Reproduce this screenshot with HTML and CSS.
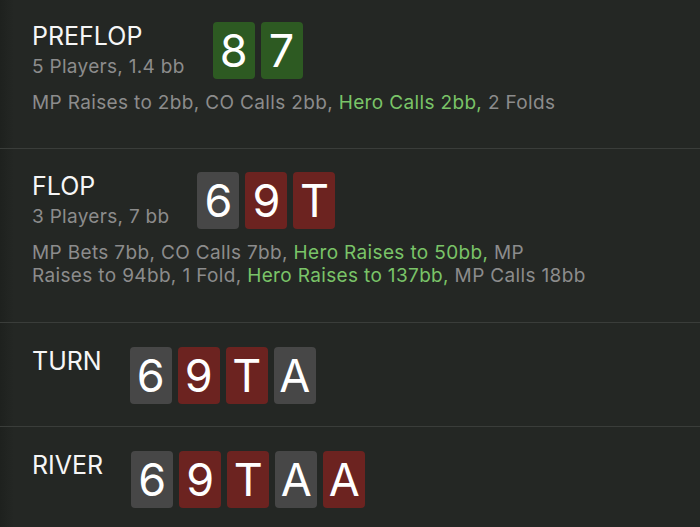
FILE: index.html
```html
<!DOCTYPE html>
<html lang="en">
<head>
<meta charset="utf-8">
<title>Hand history</title>
<link rel="stylesheet" href="styles.css">
</head>
<body>
<main class="hand">
  <section class="street street-first">
    <div class="head">
      <div class="info">
        <div class="name">PREFLOP</div>
        <div class="sub">5 Players, 1.4 bb</div>
      </div>
      <div class="cards">
        <span class="card green">8</span>
        <span class="card green">7</span>
      </div>
    </div>
    <p class="actions">MP Raises to 2bb, CO Calls 2bb, <span class="hero">Hero Calls 2bb,</span> 2 Folds</p>
  </section>
  <section class="street">
    <div class="head">
      <div class="info">
        <div class="name">FLOP</div>
        <div class="sub">3 Players, 7 bb</div>
      </div>
      <div class="cards">
        <span class="card gray">6</span>
        <span class="card red">9</span>
        <span class="card red">T</span>
      </div>
    </div>
    <p class="actions">MP Bets 7bb, CO Calls 7bb, <span class="hero">Hero Raises to 50bb,</span> MP<br>Raises to 94bb, 1 Fold, <span class="hero">Hero Raises to 137bb,</span> MP Calls 18bb</p>
  </section>
  <section class="street street-short">
    <div class="head">
      <div class="info">
        <div class="name">TURN</div>
      </div>
      <div class="cards">
        <span class="card gray">6</span>
        <span class="card red">9</span>
        <span class="card red">T</span>
        <span class="card gray">A</span>
      </div>
    </div>
  </section>
  <section class="street street-short">
    <div class="head">
      <div class="info">
        <div class="name">RIVER</div>
      </div>
      <div class="cards">
        <span class="card gray">6</span>
        <span class="card red">9</span>
        <span class="card red">T</span>
        <span class="card gray">A</span>
        <span class="card red">A</span>
      </div>
    </div>
  </section>
</main>
</body>
</html>
```
FILE: styles.css
```css
html, body {
  margin: 0;
  padding: 0;
  height: 100%;
}
body {
  background: linear-gradient(to right, #1e211e 0, #242724 14px) #242724;
  font-family: "Inter", "Liberation Sans", Arial, sans-serif;
  color: #f2f2f2;
  overflow: hidden;
}
.hand {
  display: flex;
  flex-direction: column;
}
.street {
  border-top: 1px solid #3a3d3a;
  padding: 23px 32px 35px;
}
.street-first {
  border-top: none;
  padding-top: 22px;
  padding-bottom: 34px;
}
.street-short {
  padding-top: 24px;
  padding-bottom: 22px;
}
.head {
  display: flex;
  align-items: flex-start;
  gap: 28px;
}
.info {
  display: flex;
  flex-direction: column;
}
.name {
  font-size: 25px;
  line-height: 29px;
  color: #f6f6f6;
}
.sub {
  margin-top: 4px;
  font-size: 19px;
  line-height: 23px;
  letter-spacing: 0.3px;
  color: #8c8c8c;
}
.cards {
  display: flex;
  gap: 6px;
}
.card {
  width: 42px;
  height: 57px;
  border-radius: 4px;
  display: flex;
  justify-content: center;
  font-size: 45px;
  line-height: 57px;
  color: #ffffff;
}
.green { background: #2d5a22; }
.red { background: #6c2320; }
.gray { background: #474747; }
.actions {
  margin: 12px 0 0;
  max-width: 600px;
  font-size: 19px;
  line-height: 23px;
  letter-spacing: 0.35px;
  color: #8c8c8c;
}
.hero {
  color: #7ac468;
}
```
